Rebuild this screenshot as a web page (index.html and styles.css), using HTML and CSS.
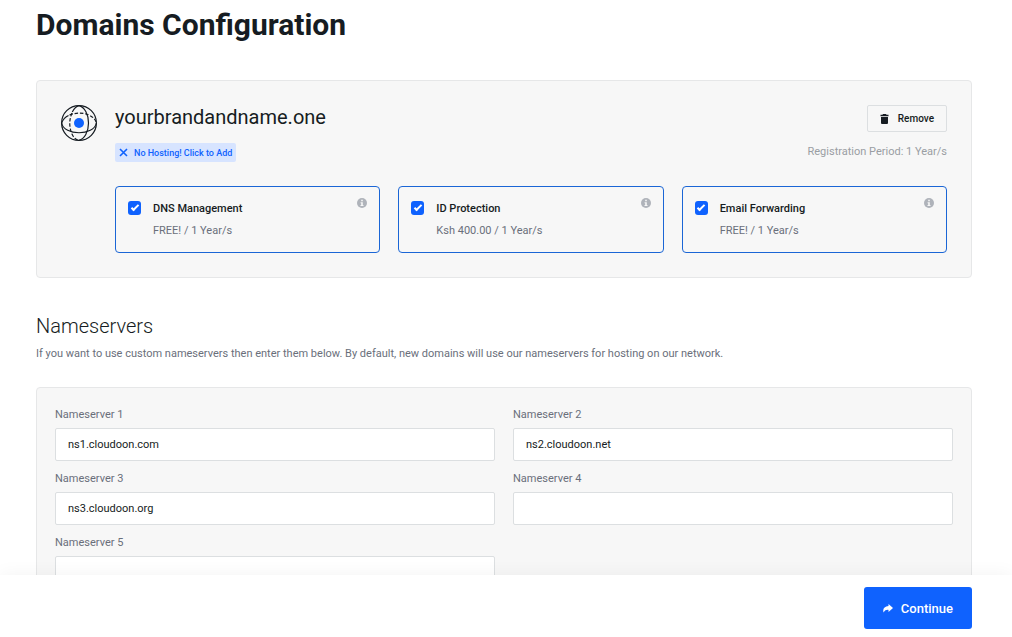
FILE: index.html
```html
<!DOCTYPE html>
<html lang="en">
<head>
  <meta charset="UTF-8" />
  <meta name="viewport" content="width=device-width, initial-scale=1.0"/>
  <title>Domains Configuration</title>
  <link rel="stylesheet" href="styles.css">
</head>
<body>
  <main>
    <h1>Domains Configuration</h1>

    <section class="panel domain">
      <svg class="domain-icon" viewBox="0 0 36 36" fill="none" stroke="#161c22" stroke-width="1.2">
        <circle cx="18" cy="18" r="17.400"/>
        <path d="M18 .6C23.500 2 27.500 9 27.500 18C27.500 27 23.500 34 18 35.400"/>
        <path d="M.6 18C3 31 33 31 35.400 18"/>
        <path d="M18 .6C15.500 1.200 13 3.500 11.300 7"/>
        <path d="M11 8C8 15 8 22 11 29C12.500 32.500 15 34.800 18 35.400" stroke-dasharray="3.500 1.800"/>
        <path d="M.6 18C2 14.500 4 12 7.500 10.500"/>
        <path d="M8.500 10C15 7.500 22 7.500 28 10C32 12 34.500 14.500 35.400 18" stroke-dasharray="3.500 1.800"/>
        <circle cx="18" cy="18" r="5" fill="#0f62fe" stroke="none"/>
      </svg>
      <div class="domain-body">
        <div class="domain-head">
          <div>
            <h2 class="domain-name">yourbrandandname.one</h2>
            <a href="#" class="badge">
              <svg width="9" height="9" viewBox="0 0 9 9" fill="none" stroke="currentColor" stroke-width="1.6"><path d="M1 1l7 7M8 1L1 8"/></svg>
              No Hosting! Click to Add
            </a>
          </div>
          <div class="domain-side">
            <button type="button" class="btn-remove">
              <svg width="9" height="10" viewBox="0 0 9 10" fill="currentColor"><path d="M3 0h3l.5.8H8.500v1.400H.5V.8h2zM1 3h7v6q0 1-1 1H2q-1 0-1-1z"/></svg>
              Remove
            </button>
            <p class="period">Registration Period: 1 Year/s</p>
          </div>
        </div>

        <div class="addons">
          <label class="addon">
            <input type="checkbox" checked>
            <span class="addon-text">
              <strong>DNS Management</strong>
              <span>FREE! / 1 Year/s</span>
            </span>
            <svg class="info" viewBox="0 0 10 10"><circle cx="5" cy="5" r="5" fill="#afb3ba"/><path d="M4.200 1.800h1.600v1.500H4.200zM3.600 4.200h2.200v2.800h.7v1.100H3.500V7h.7V5.200h-.6z" fill="#f7f7f7"/></svg>
          </label>
          <label class="addon">
            <input type="checkbox" checked>
            <span class="addon-text">
              <strong>ID Protection</strong>
              <span>Ksh 400.00 / 1 Year/s</span>
            </span>
            <svg class="info" viewBox="0 0 10 10"><circle cx="5" cy="5" r="5" fill="#afb3ba"/><path d="M4.200 1.800h1.600v1.500H4.200zM3.600 4.200h2.200v2.800h.7v1.100H3.500V7h.7V5.200h-.6z" fill="#f7f7f7"/></svg>
          </label>
          <label class="addon">
            <input type="checkbox" checked>
            <span class="addon-text">
              <strong>Email Forwarding</strong>
              <span>FREE! / 1 Year/s</span>
            </span>
            <svg class="info" viewBox="0 0 10 10"><circle cx="5" cy="5" r="5" fill="#afb3ba"/><path d="M4.200 1.800h1.600v1.500H4.200zM3.600 4.200h2.200v2.800h.7v1.100H3.500V7h.7V5.200h-.6z" fill="#f7f7f7"/></svg>
          </label>
        </div>
      </div>
    </section>

    <h2 class="section-title">Nameservers</h2>
    <p class="section-text">If you want to use custom nameservers then enter them below. By default, new domains will use our nameservers for hosting on our network.</p>

    <section class="panel nameservers">
      <div class="field">
        <label for="ns1">Nameserver 1</label>
        <input type="text" id="ns1" value="ns1.cloudoon.com">
      </div>
      <div class="field">
        <label for="ns2">Nameserver 2</label>
        <input type="text" id="ns2" value="ns2.cloudoon.net">
      </div>
      <div class="field">
        <label for="ns3">Nameserver 3</label>
        <input type="text" id="ns3" value="ns3.cloudoon.org">
      </div>
      <div class="field">
        <label for="ns4">Nameserver 4</label>
        <input type="text" id="ns4">
      </div>
      <div class="field">
        <label for="ns5">Nameserver 5</label>
        <input type="text" id="ns5">
      </div>
    </section>
  </main>

  <footer class="bottom-bar">
    <button type="submit" class="btn-continue">
      <svg width="10" height="9" viewBox="0 0 10 9" fill="currentColor"><path d="M5.500 0L10 4L5.500 8V5.900C3.300 5.700 1.800 6.300 .6 8.600C-.6 5 1.300 2.200 5.500 2z"/></svg>
      Continue
    </button>
  </footer>
</body>
</html>
```
FILE: styles.css
```css
:root {
  --primary: #0f62fe;
  --dark: #161c22;
  --muted: #6a6f7b;
  --panel: #f7f7f7;
  --border: #e6e7e8;
}

* {
  box-sizing: border-box;
}

html {
  scrollbar-width: none;
}

body {
  font-family: Roboto, sans-serif;
  font-size: 11px;
  line-height: 18px;
  margin: 0;
  background-color: white;
  color: var(--dark);
}

h1, h2, p {
  margin: 0;
}

main {
  padding: 5px 40px 84px 36px;
}

h1 {
  font-size: 30px;
  line-height: 40px;
  font-weight: 700;
  margin-bottom: 35px;
}

.panel {
  background-color: var(--panel);
  border: 1px solid var(--border);
  border-radius: 4px;
}

.domain {
  display: flex;
  gap: 18px;
  padding: 24px;
}

.domain-icon {
  width: 36px;
  height: 36px;
  flex-shrink: 0;
}

.domain-body {
  flex: 1;
}

.domain-head {
  display: flex;
  justify-content: space-between;
  margin-bottom: 24px;
}

.domain-name {
  font-size: 20px;
  line-height: 24px;
  font-weight: 400;
  margin-bottom: 14px;
}

.badge {
  display: flex;
  align-items: center;
  gap: 6px;
  width: max-content;
  height: 19px;
  padding: 0 4px;
  border-radius: 2px;
  background-color: #d7e4ff;
  color: var(--primary);
  font-size: 9px;
  font-weight: 500;
  text-decoration: none;
}

.domain-side {
  display: flex;
  flex-direction: column;
  align-items: flex-end;
  gap: 11px;
}

button {
  display: flex;
  align-items: center;
  font-family: inherit;
  font-weight: 500;
  cursor: pointer;
}

.btn-remove {
  gap: 9px;
  height: 27px;
  padding: 0 12px;
  border: 1px solid #dcdfe1;
  border-radius: 2px;
  background-color: var(--panel);
  color: var(--dark);
  font-size: 10px;
}

.period {
  color: #9a9ea3;
}

.addons {
  display: grid;
  grid-template-columns: repeat(3, 1fr);
  gap: 18px;
}

.addon {
  display: flex;
  height: 67px;
  padding: 11px 12px;
  border: 1px solid #1b66d6;
  border-radius: 4px;
  cursor: pointer;
}

.addon input {
  appearance: none;
  display: grid;
  place-items: center;
  width: 13px;
  height: 14px;
  margin: 3px 12px 0 0;
  padding-bottom: 3px;
  border-radius: 3px;
  background-color: var(--primary);
}

.addon input:checked::before {
  content: "";
  width: 6px;
  height: 2px;
  border: solid white;
  border-width: 0 0 2px 2px;
  transform: rotate(-45deg);
}

.addon-text {
  display: flex;
  flex-direction: column;
  gap: 4px;
  flex: 1;
  padding-top: 2px;
  color: var(--muted);
}

.addon-text strong {
  font-weight: 500;
  color: var(--dark);
}

.info {
  width: 10px;
  height: 10px;
}

.section-title {
  font-size: 20px;
  line-height: 24px;
  font-weight: 300;
  margin-top: 36px;
  margin-bottom: 7px;
}

.section-text {
  color: var(--muted);
  margin-bottom: 24px;
}

.nameservers {
  display: grid;
  grid-template-columns: repeat(2, 1fr);
  column-gap: 18px;
  row-gap: 9px;
  padding: 18px;
}

.field label {
  display: block;
  color: var(--muted);
  margin-bottom: 4px;
}

.field input {
  display: block;
  width: 100%;
  height: 33px;
  padding: 0 12px;
  border: 1px solid #dcdfe1;
  border-radius: 2px;
  background-color: white;
  color: var(--dark);
  font-family: inherit;
  font-size: 11px;
}

.bottom-bar {
  position: fixed;
  left: 0;
  right: 0;
  bottom: 0;
  display: flex;
  justify-content: flex-end;
  padding: 12px 40px 8px;
  background-color: white;
  box-shadow: 0 0 18px rgba(0,0,0,0.05);
}

.btn-continue {
  gap: 8px;
  height: 42px;
  padding: 0 19px;
  border: none;
  border-radius: 3px;
  background-color: var(--primary);
  color: white;
  font-size: 13px;
}
```
